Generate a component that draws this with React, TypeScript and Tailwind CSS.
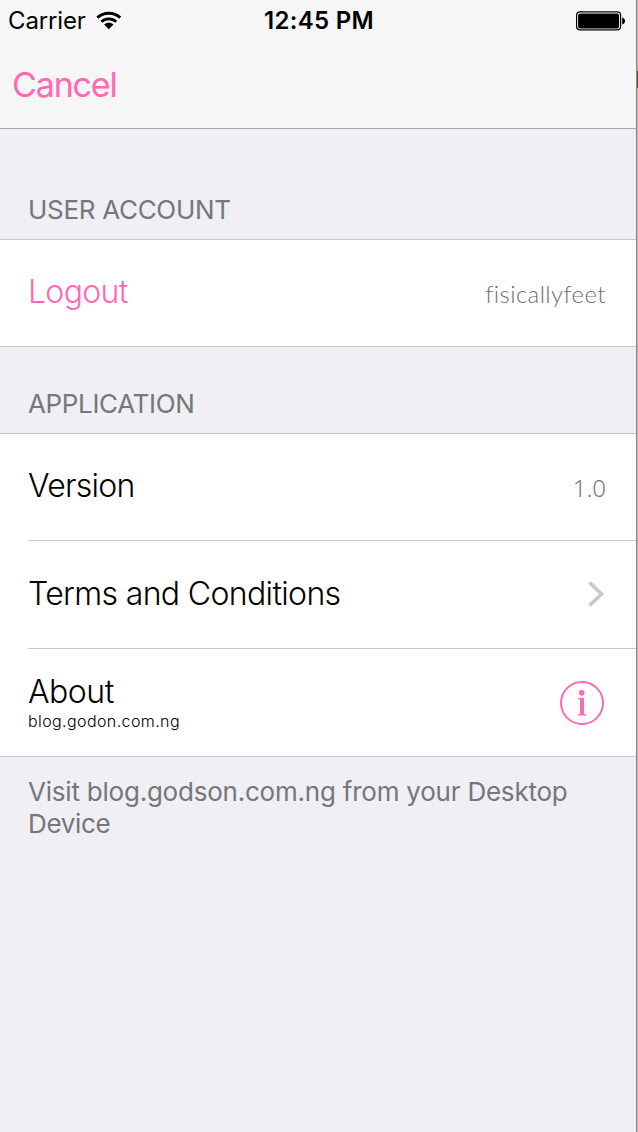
import type { ReactNode } from "react";

function StatusBar() {
  return (
    <div className="grid h-[41px] grid-cols-3 items-center pt-px text-[24px] leading-10 text-black">
      <div className="flex items-center gap-[11px] pl-2">
        <span className="tracking-[-0.15px]">Carrier</span>
        <svg width="26" height="20" viewBox="0 0 26 20" className="-ml-px -mt-px" fill="none">
          <path d="M1.4 6.7C7.6 0.9 18 0.9 24.2 6.7" stroke="black" strokeWidth="3" />
          <path d="M5.4 10.8C9.6 6.9 16 6.9 20.2 10.8" stroke="black" strokeWidth="2.7" />
          <path d="M8.1 13.5C10.8 11 14.8 11 17.5 13.5L12.8 18.2Z" fill="black" />
        </svg>
      </div>
      <div className="pl-0.5 text-center font-semibold">
        <span className="tracking-[0.3px]">12:45 PM</span>
      </div>
      <div className="flex justify-end pr-[10px]">
        <svg width="50" height="20" viewBox="0 0 50 20">
          <rect x="0.6" y="0.9" width="44" height="18" rx="3.4" fill="white" stroke="black" strokeWidth="1.2" />
          <rect x="2.1" y="2.4" width="41" height="15" rx="2" fill="black" />
          <path d="M46.2 6.5C48 7 49 8.3 49 10S48 13 46.2 13.5Z" fill="black" />
        </svg>
      </div>
    </div>
  );
}

function SectionTitle({ children }: { children: ReactNode }) {
  return <h2 className="text-[26px] leading-8 font-normal text-[#76767b]">{children}</h2>;
}

export default function App() {
  return (
    <div className="flex h-[1132px] w-[638px] overflow-hidden bg-[#efeff4] font-['Inter',sans-serif]">
      <main className="flex w-[636px] shrink-0 flex-col">
        <header className="h-[129px] border-b border-[#a7a7aa] bg-[#f6f6f7]">
          <StatusBar />
          <div className="flex h-[87px] items-center pl-3">
            <button className="text-[34px] leading-10 font-normal tracking-[-1.15px] text-[#ff69b4]">Cancel</button>
          </div>
        </header>

        <div className="flex h-[110px] items-end pb-[13px] pl-7">
          <SectionTitle>
            <span className="tracking-[-0.3px]">USER ACCOUNT</span>
          </SectionTitle>
        </div>
        <section className="border-y border-[#c8c7cc] bg-white">
          <div className="flex h-[106px] items-center justify-between pr-[30px] pb-[2px] pl-7">
            <span className="text-[32px] leading-10 font-light tracking-[-0.7px] text-[#ff69b4]">Logout</span>
            <span className="pt-[4px] font-['Lato',sans-serif] text-[24px] leading-8 font-light tracking-[0.4px] text-[#6e6e72]">fisicallyfeet</span>
          </div>
        </section>

        <div className="flex h-[86px] items-end pb-[13px] pl-7">
          <SectionTitle>
            <span className="tracking-[-0.35px]">APPLICATION</span>
          </SectionTitle>
        </div>
        <section className="border-y border-[#c8c7cc] bg-white text-black">
          <div className="ml-7 flex h-[107px] items-center justify-between border-b border-[#c8c7cc] pr-[30px] pb-[2px]">
            <span className="text-[32px] leading-10 font-light tracking-[-0.75px]">Version</span>
            <span className="pt-[3px] font-['Noto_Sans',sans-serif] text-[24px] leading-8 font-light text-[#7a7a7f]">1.0</span>
          </div>
          <div className="ml-7 flex h-[108px] items-center justify-between border-b border-[#c8c7cc] pr-[30px] pb-px">
            <span className="text-[32px] leading-10 font-light tracking-[-0.65px]">Terms and Conditions</span>
            <svg width="20" height="28" viewBox="0 0 20 28" fill="none">
              <path d="M3.5 2.5L15.5 14L3.5 25.5" stroke="#c7c7cc" strokeWidth="3.8" />
            </svg>
          </div>
          <div className="ml-7 flex h-[107px] items-center justify-between pr-8">
            <div className="flex flex-col pb-0.5">
              <span className="text-[32px] leading-10 font-light tracking-[-0.5px]">About</span>
              <span className="-mt-px text-[16px] leading-5 font-light tracking-[0.4px]">blog.godon.com.ng</span>
            </div>
            <svg width="44" height="44" viewBox="0 0 44 44" className="mt-px">
              <circle cx="22" cy="22" r="21" fill="none" stroke="#ff69b4" strokeWidth="2" />
              <circle cx="21.7" cy="11.8" r="2.8" fill="#ff69b4" />
              <path d="M18 17H24V33H26V34.5H18V33H20V18.2H18Z" fill="#ff69b4" />
            </svg>
          </div>
        </section>

        <p className="pt-[19px] pr-12 pl-7 text-[26px] leading-8 font-normal text-[#76767b]">
          <span className="block tracking-[-0.22px] whitespace-nowrap">Visit blog.godson.com.ng from your Desktop</span>
          <span className="block tracking-[-0.35px]">Device</span>
        </p>
      </main>
      <aside className="flex w-[2px] flex-col border-l border-[#87878a] bg-[#b9b9bc]">
        <div className="mt-[71px] h-[17px] w-px bg-[#4d5a12]" />
      </aside>
    </div>
  );
}
